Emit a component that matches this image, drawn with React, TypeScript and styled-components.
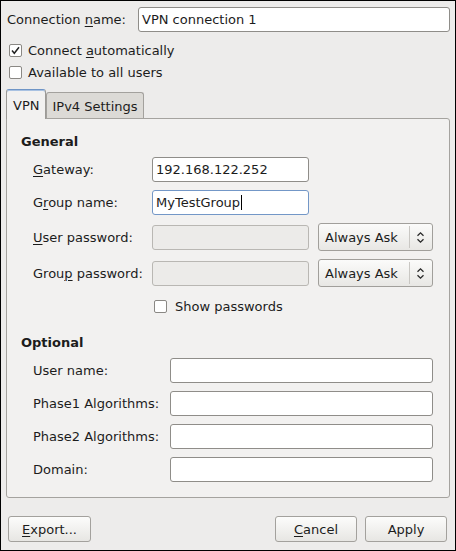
import React from "react";
import styled, { createGlobalStyle } from "styled-components";

const Global = createGlobalStyle`
  html, body { margin: 0; padding: 0; background: #edeceb; }
  * { box-sizing: border-box; }
`;

const Window = styled.div`
  width: 456px;
  height: 551px;
  border: 1px solid #000;
  background: #edeceb;
  padding: 6px 5px 0 5px;
  display: flex;
  flex-direction: column;
  font-family: "DejaVu Sans", "Noto Sans", sans-serif;
  font-size: 13px;
  line-height: 15px;
  color: #1c1c1c;
`;

const NameRow = styled.div`
  display: grid;
  grid-template-columns: 132px 1fr;
  align-items: center;
  height: 25px;
`;

const Label = styled.span<{ $pad?: number }>`
  padding-left: ${(p) => p.$pad ?? 0}px;
  white-space: nowrap;
`;

const U = styled.span`
  text-decoration: underline;
  text-underline-offset: 2px;
  text-decoration-thickness: 1px;
`;

const Entry = styled.div<{ $focus?: boolean; $disabled?: boolean }>`
  height: 25px;
  border: 1px solid ${(p) => (p.$focus ? "#7397c7" : p.$disabled ? "#b9b7b3" : "#8f8d89")};
  border-radius: 3px;
  background: ${(p) => (p.$disabled ? "#ecebe9" : "#ffffff")};
  padding: 0 3px;
  display: flex;
  align-items: center;
  white-space: nowrap;
  overflow: hidden;
`;

const Caret = styled.span`
  display: inline-block;
  width: 1px;
  height: 15px;
  background: #000;
  margin-left: 1px;
`;

const CheckRow = styled.div<{ $mt: number }>`
  display: flex;
  align-items: center;
  height: 18px;
  margin-top: ${(p) => p.$mt}px;
  padding-left: 3px;
  gap: 6px;
`;

const Box = styled.span`
  width: 13px;
  height: 13px;
  border: 1px solid #8a8884;
  border-radius: 2px;
  background: #fff;
  display: inline-flex;
  align-items: center;
  justify-content: center;
  flex: none;
`;

const Check = ({ checked }: { checked?: boolean }) => (
  <Box>
    {checked && (
      <svg width="11" height="11" viewBox="0 0 11 11">
        <path d="M2 5.5 L4.3 8.2 L9 2.2" fill="none" stroke="#222" strokeWidth="1.5" />
      </svg>
    )}
  </Box>
);

const TabStrip = styled.div`
  display: flex;
  align-items: flex-end;
  margin-top: 8px;
  height: 29px;
  position: relative;
  z-index: 1;
`;

const Tab = styled.div<{ $active?: boolean }>`
  height: ${(p) => (p.$active ? 30 : 26)}px;
  margin-bottom: ${(p) => (p.$active ? -1 : 0)}px;
  padding: ${(p) => (p.$active ? "8px 6px 0" : "6px 5px 0")};
  border: 1px solid ${(p) => (p.$active ? "#9c9a96" : "#a3a19d")};
  border-top-color: ${(p) => (p.$active ? "#6f95c6" : "#a3a19d")};
  border-bottom: none;
  border-radius: 3px 3px 0 0;
  background: ${(p) => (p.$active ? "#f2f1f0" : "#dcdad6")};
  box-shadow: ${(p) => (p.$active ? "inset 0 1px 0 #a9c2e2" : "none")};
  white-space: nowrap;
`;

const Panel = styled.div`
  border: 1px solid #a5a39f;
  border-radius: 0 3px 3px 3px;
  background: #f2f1f0;
  padding: 15px 15px 15px 14px;
  display: flex;
  flex-direction: column;
`;

const Heading = styled.div<{ $mt?: number }>`
  font-weight: bold;
  margin-top: ${(p) => p.$mt ?? 0}px;
  height: 15px;
`;

const Grid = styled.div<{ $cols: string }>`
  display: grid;
  grid-template-columns: ${(p) => p.$cols};
  column-gap: 9px;
  row-gap: 8px;
  align-items: center;
  margin-left: 12px;
  margin-top: 8px;
`;

const Combo = styled.div`
  height: 28px;
  border: 1px solid #a19f9b;
  border-radius: 3px;
  background: linear-gradient(#fbfbfa, #e8e7e4);
  display: flex;
  align-items: center;
  padding-left: 6px;
  white-space: nowrap;
`;

const ComboText = styled.span`
  flex: 1;
`;

const Sep = styled.span`
  width: 1px;
  height: 22px;
  background: #c9c7c3;
  margin-right: 6px;
`;

const ArrowIcon = styled.svg`
  margin-right: 7px;
  flex: none;
`;

const Arrows = () => (
  <ArrowIcon width="9" height="13" viewBox="0 0 9 13">
    <path d="M1.5 4.8 L4.5 1.8 L7.5 4.8 M1.5 8.2 L4.5 11.2 L7.5 8.2" fill="none" stroke="#2a2a2a" strokeWidth="1.3" />
  </ArrowIcon>
);

const ShowRow = styled.div`
  grid-column: 2 / span 2;
  display: flex;
  align-items: center;
  gap: 8px;
  height: 18px;
  padding-left: 2px;
  margin-top: 2px;
`;

const Buttons = styled.div`
  display: flex;
  margin-top: 18px;
  padding: 0 3px 0 2px;
  gap: 8px;
`;

const Spacer = styled.div`
  flex: 1;
`;

const Button = styled.div<{ $w?: number }>`
  width: ${(p) => p.$w ?? 82}px;
  height: 26px;
  border: 1px solid #a3a19d;
  border-radius: 3px;
  background: linear-gradient(#fcfcfb, #e7e6e3);
  display: flex;
  align-items: center;
  justify-content: center;
`;

const Empty = styled.span``;

export default function App() {
  return (
    <>
      <Global />
      <Window>
        <NameRow>
          <Label $pad={1}>
            Connection <U>n</U>ame:
          </Label>
          <Entry>VPN connection 1</Entry>
        </NameRow>
        <CheckRow $mt={9}>
          <Check checked />
          <span>
            Connect <U>a</U>utomatically
          </span>
        </CheckRow>
        <CheckRow $mt={4}>
          <Check />
          <span>Available to all users</span>
        </CheckRow>
        <TabStrip>
          <Tab $active>VPN</Tab>
          <Tab>IPv4 Settings</Tab>
        </TabStrip>
        <Panel>
          <Heading>General</Heading>
          <Grid $cols="110px 157px 115px">
            <Label>
              <U>G</U>ateway:
            </Label>
            <Entry>192.168.122.252</Entry>
            <Empty />
            <Label>
              G<U>r</U>oup name:
            </Label>
            <Entry $focus>
              MyTestGroup
              <Caret />
            </Entry>
            <Empty />
            <Label>
              <U>U</U>ser password:
            </Label>
            <Entry $disabled />
            <Combo>
              <ComboText>Always Ask</ComboText>
              <Sep />
              <Arrows />
            </Combo>
            <Label>
              Grou<U>p</U> password:
            </Label>
            <Entry $disabled />
            <Combo>
              <ComboText>Always Ask</ComboText>
              <Sep />
              <Arrows />
            </Combo>
            <Empty />
            <ShowRow>
              <Check />
              <span>Show passwords</span>
            </ShowRow>
          </Grid>
          <Heading $mt={20}>Optional</Heading>
          <Grid $cols="128px 263px">
            <Label>User name:</Label>
            <Entry />
            <Label>Phase1 Algorithms:</Label>
            <Entry />
            <Label>Phase2 Algorithms:</Label>
            <Entry />
            <Label>Domain:</Label>
            <Entry />
          </Grid>
        </Panel>
        <Buttons>
          <Button $w={83}>
            <span>
              <U>E</U>xport...
            </span>
          </Button>
          <Spacer />
          <Button>
            <span>
              <U>C</U>ancel
            </span>
          </Button>
          <Button>Apply</Button>
        </Buttons>
      </Window>
    </>
  );
}
